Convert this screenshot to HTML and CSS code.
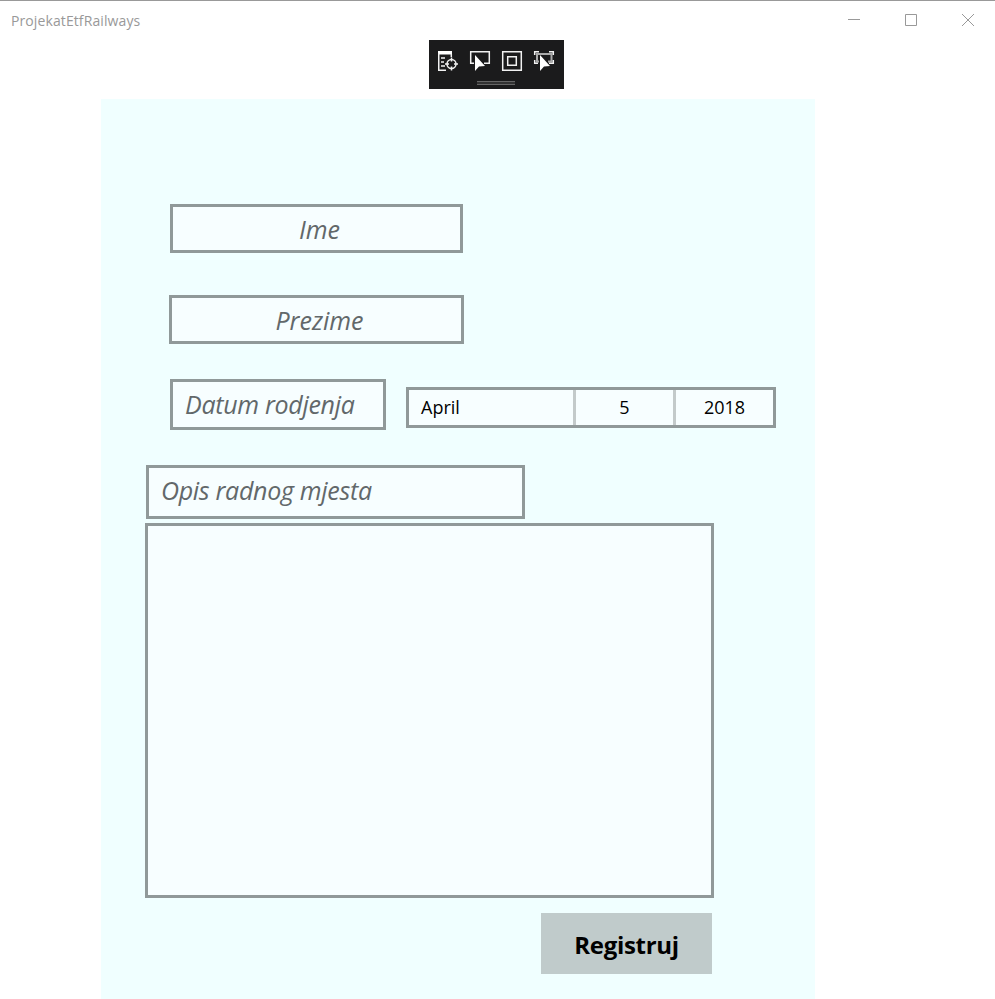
FILE: index.html
```html
<!DOCTYPE html>
<html lang="bs">
<head>
<meta charset="utf-8">
<title>ProjekatEtfRailways</title>
<link rel="stylesheet" href="styles.css">
</head>
<body>
<header class="titlebar">
  <span class="title">ProjekatEtfRailways</span>
  <div class="controls">
    <svg width="12" height="12" viewBox="0 0 12 12"><path d="M0 5.5h12"/></svg>
    <svg width="12" height="12" viewBox="0 0 12 12"><path d="M.5.5h11v11H.5z"/></svg>
    <svg width="12" height="12" viewBox="0 0 12 12"><path d="M0 0l12 12M12 0L0 12"/></svg>
  </div>
</header>
<div class="toolbar">
  <div class="tools">
    <svg width="22" height="22" viewBox="0 0 22 22">
      <path class="solid" d="M1 1h14v3.5H1z"/>
      <path d="M1.75 3v17.25H9M14.3 4v3M4 8h4M4 12h3M4 16h4"/>
      <circle cx="14.5" cy="14" r="4.5"/>
      <path d="M14.5 7.5v4M14.5 16.5v4M8 14h4M17 14h4"/>
    </svg>
    <svg width="22" height="22" viewBox="0 0 22 22">
      <path d="M5 13.3H1.7V1.7h18.6v11.6H15"/>
      <path class="solid" d="M6 5v16l4-4.5 6-.5z"/>
    </svg>
    <svg width="22" height="22" viewBox="0 0 22 22">
      <path d="M1.7 1.7h18.6v18.6H1.7zM6.7 6.7h8.6v8.6H6.7z"/>
    </svg>
    <svg width="22" height="22" viewBox="0 0 22 22">
      <path class="dim" d="M6 11.5H4V4h14.500v7.500H15"/>
      <path d="M1.700 5V1.700H6M16 1.700h4.300V5M1.700 10v3.300H5M20.300 10v3.300H16"/>
      <path class="solid" d="M7 5v16l4-4.500 6-.5z"/>
    </svg>
  </div>
  <div class="grip"></div>
</div>
<main class="panel">
  <div class="box first-name"><span>Ime</span></div>
  <div class="box last-name"><span>Prezime</span></div>
  <div class="birth-row">
    <div class="box birth"><span>Datum rodjenja</span></div>
    <div class="date">
      <span class="month">April</span><span class="day">5</span><span class="year">2018</span>
    </div>
  </div>
  <div class="box job"><span>Opis radnog mjesta</span></div>
  <div class="box description"></div>
  <button class="submit">Registruj</button>
</main>
</body>
</html>
```
FILE: styles.css
```css
* { box-sizing: border-box; }
body {
  margin: 0;
  height: 999px;
  overflow: hidden;
  background: #fff;
  font-family: "Open Sans", "Noto Sans", sans-serif;
  display: flex;
  flex-direction: column;
}
.titlebar {
  height: 40px;
  flex: none;
  border-top: 1px solid #999;
  padding: 0 21px 1px 11px;
  display: flex;
  justify-content: space-between;
  align-items: center;
}
.title { font-size: 14px; color: #999; letter-spacing: 0.1px; }
.controls { display: flex; gap: 45px; }
.controls svg { fill: none; stroke: #999; stroke-width: 1; }
.toolbar {
  width: 135px;
  height: 49px;
  flex: none;
  margin-left: 429px;
  padding: 10px 8px 0;
  background: #1b1b1c;
}
.tools { display: flex; gap: 10px; }
.tools svg { flex: none; fill: none; stroke: #f1f1f1; stroke-width: 1.5; }
.tools .solid { fill: #fff; stroke: none; }
.tools .dim { stroke: #aaa; stroke-width: 2; }
.grip {
  width: 38px;
  height: 4px;
  margin: 9px 0 0 40px;
  border: solid #666;
  border-width: 1px 0;
  background: #333;
}
.panel {
  width: 714px;
  height: 900px;
  flex: none;
  margin: 10px 0 0 101px;
  padding-top: 105px;
  background: #f0ffff;
}
.box {
  border: 3px solid #909999;
  background: #f7feff;
  color: #62686a;
  font-size: 25px;
  font-style: italic;
  line-height: 44px;
  letter-spacing: -0.3px;
  white-space: nowrap;
}
.first-name { width: 293px; height: 49px; margin-left: 69px; padding-left: 6px; letter-spacing: 0; text-align: center; }
.last-name { width: 295px; height: 49px; margin: 42px 0 0 68px; padding-left: 6px; letter-spacing: 0; text-align: center; }
.birth-row { display: flex; gap: 20px; margin: 35px 0 0 69px; }
.birth { width: 216px; height: 51px; padding-left: 12px; }
.date {
  width: 370px;
  height: 41px;
  margin-top: 8px;
  border: 3px solid #909999;
  background: #f7feff;
  color: #000;
  font-size: 18px;
  line-height: 35px;
  display: flex;
  text-align: center;
}
.date span + span { border-left: 3px solid #c3caca; }
.month { width: 164px; padding-left: 12px; text-align: left; }
.day { width: 100px; }
.year { width: 100px; }
.job { width: 379px; height: 54px; margin: 35px 0 0 45px; padding-left: 12px; }
.description { width: 569px; height: 375px; margin: 4px 0 0 44px; }
.submit {
  display: block;
  width: 171px;
  height: 61px;
  margin: 15px 0 0 440px;
  padding: 1px 0 0;
  border: 0;
  background: #c0cbcb;
  color: #000;
  font: 700 24px "Open Sans", "Noto Sans", sans-serif;
  letter-spacing: -0.3px;
}
```
